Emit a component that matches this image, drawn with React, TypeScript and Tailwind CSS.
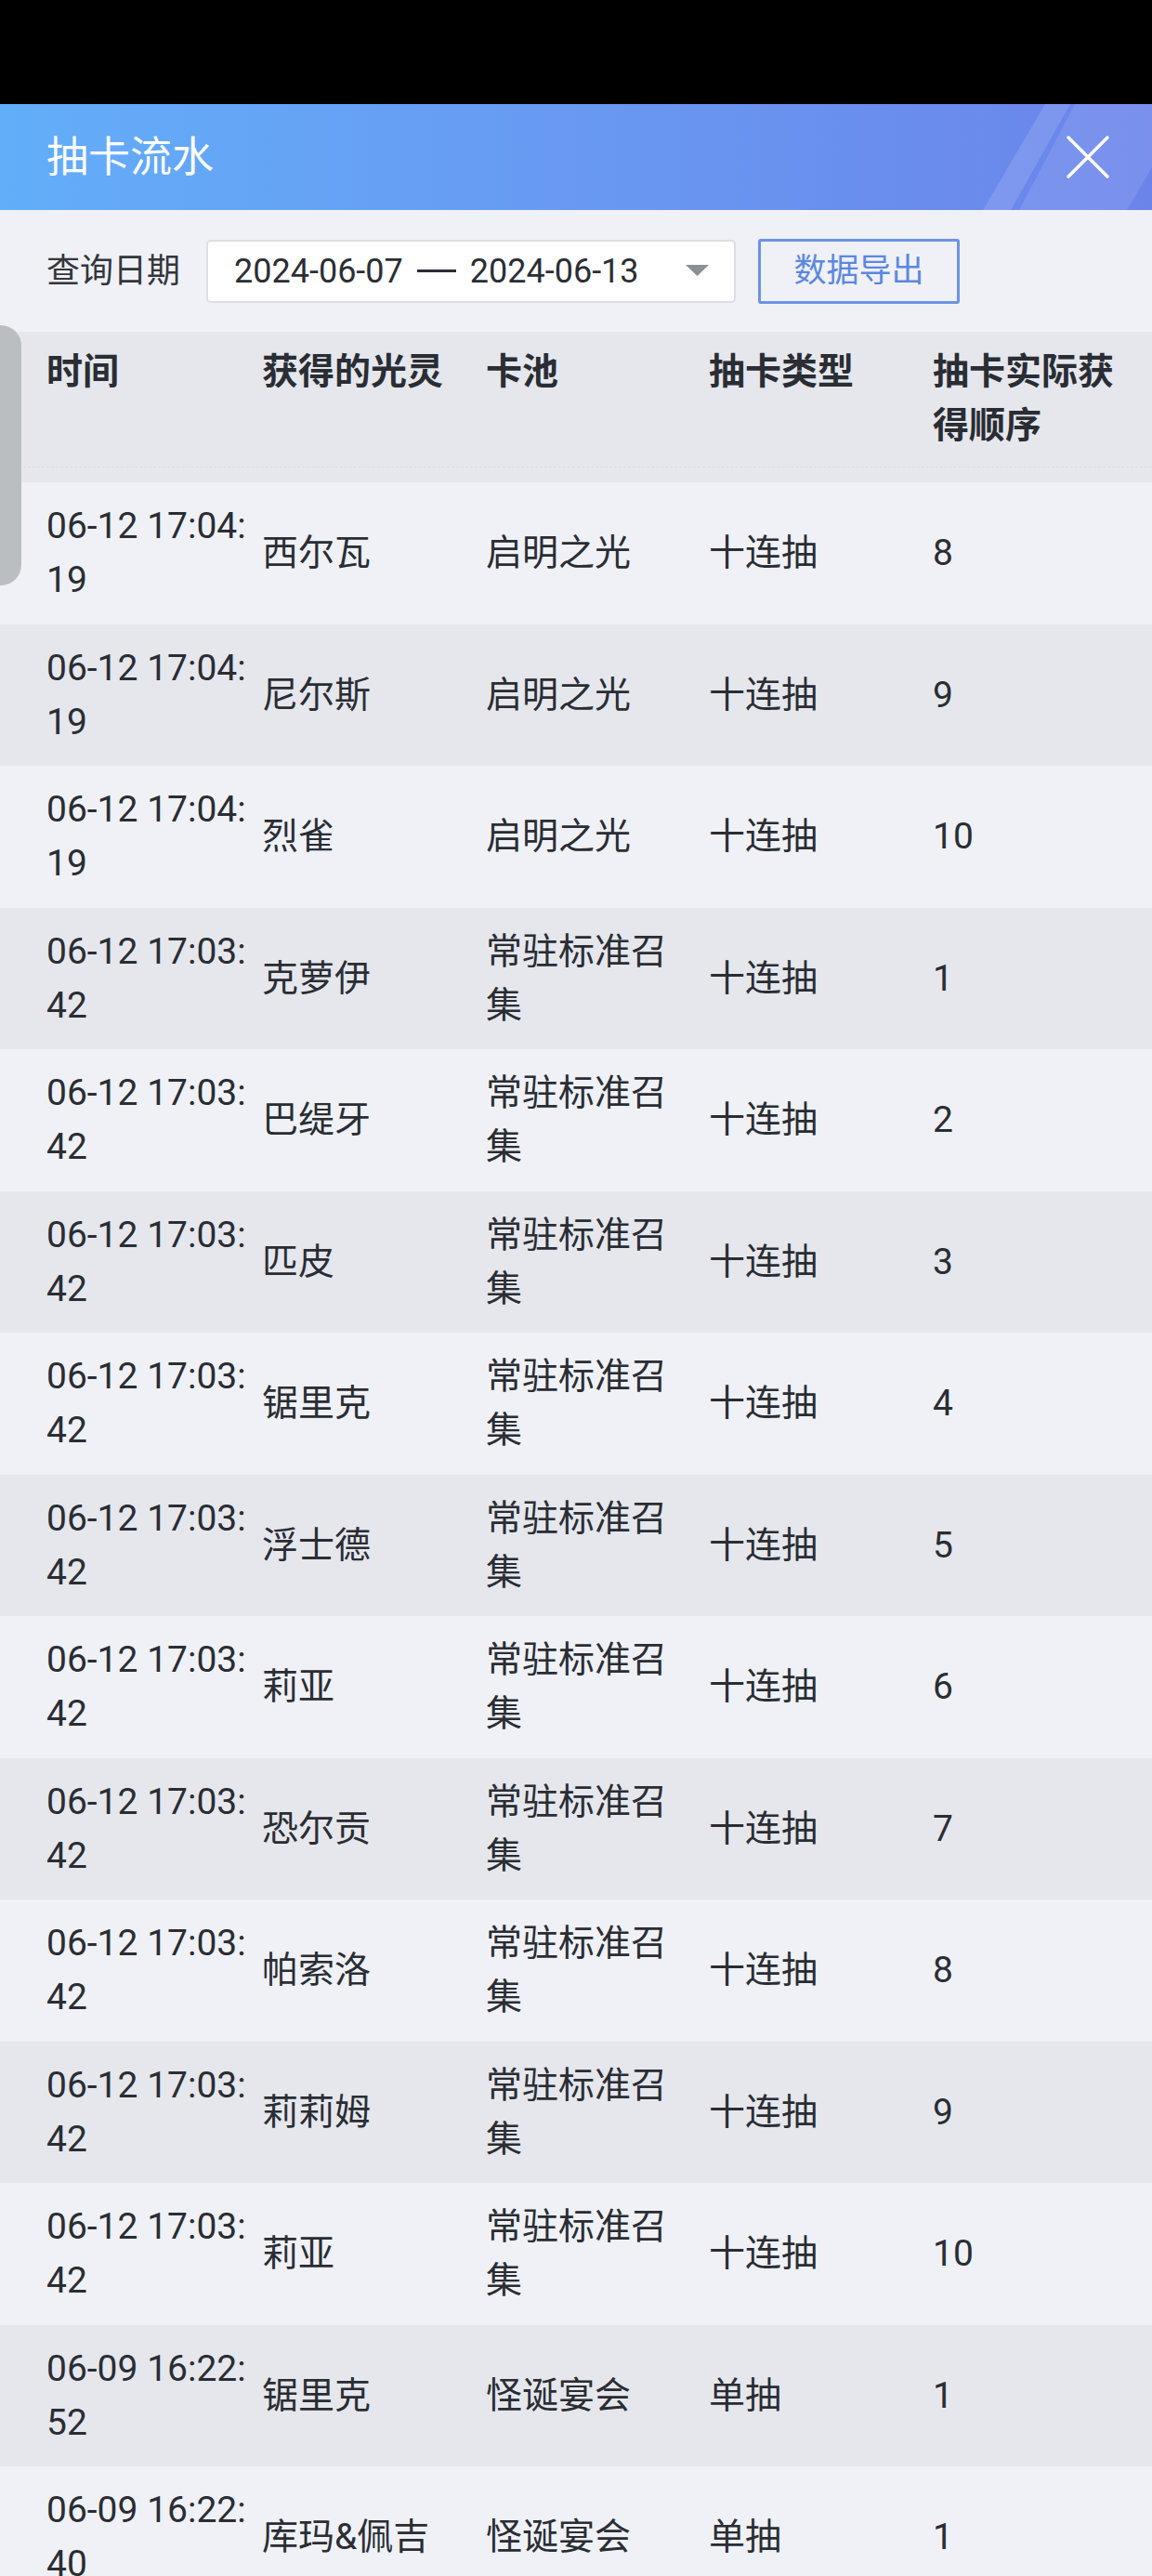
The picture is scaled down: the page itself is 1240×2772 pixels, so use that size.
const headers = ['时间', '获得的光灵', '卡池', '抽卡类型', '抽卡实际获得顺序'];

const rows = [
  ['06-12 17:04:19', '西尔瓦', '启明之光', '十连抽', '8'],
  ['06-12 17:04:19', '尼尔斯', '启明之光', '十连抽', '9'],
  ['06-12 17:04:19', '烈雀', '启明之光', '十连抽', '10'],
  ['06-12 17:03:42', '克萝伊', '常驻标准召集', '十连抽', '1'],
  ['06-12 17:03:42', '巴缇牙', '常驻标准召集', '十连抽', '2'],
  ['06-12 17:03:42', '匹皮', '常驻标准召集', '十连抽', '3'],
  ['06-12 17:03:42', '锯里克', '常驻标准召集', '十连抽', '4'],
  ['06-12 17:03:42', '浮士德', '常驻标准召集', '十连抽', '5'],
  ['06-12 17:03:42', '莉亚', '常驻标准召集', '十连抽', '6'],
  ['06-12 17:03:42', '恐尔贡', '常驻标准召集', '十连抽', '7'],
  ['06-12 17:03:42', '帕索洛', '常驻标准召集', '十连抽', '8'],
  ['06-12 17:03:42', '莉莉姆', '常驻标准召集', '十连抽', '9'],
  ['06-12 17:03:42', '莉亚', '常驻标准召集', '十连抽', '10'],
  ['06-09 16:22:52', '锯里克', '怪诞宴会', '单抽', '1'],
  ['06-09 16:22:40', '库玛&佩吉', '怪诞宴会', '单抽', '1'],
];

export default function App() {
  return (
    <div className="relative h-[2772px] w-full overflow-hidden bg-[#eff1f6] font-[Roboto,'Noto_Sans_CJK_SC',sans-serif] text-[#2a2d34]">
      {/* status bar */}
      <div className="h-[112px] bg-black" />

      {/* title bar */}
      <header className="relative flex h-[114px] items-center justify-between overflow-hidden bg-linear-to-r from-[#62aef9] to-[#6b84ea] pl-[50px] pr-[45px]">
        <svg className="absolute inset-0 h-full w-full" viewBox="0 0 1240 114" preserveAspectRatio="none">
          <polygon points="1125,0 1152,0 1088,114 1058,114" fill="#ffffff" fillOpacity="0.13" />
          <polygon points="1157,0 1280,0 1213,114 1097,114" fill="#ffffff" fillOpacity="0.1" />
        </svg>
        <h1 className="relative text-[45px] leading-none text-white">抽卡流水</h1>
        <button className="relative flex h-[48px] w-[48px] items-center justify-center">
          <svg width="48" height="48" viewBox="0 0 48 48" fill="none" stroke="#ffffff" strokeWidth="3.5" strokeLinecap="round">
            <path d="M3 3L45 45M45 3L3 45" />
          </svg>
        </button>
      </header>

      {/* filter row */}
      <div className="flex h-[131px] items-center pl-[50px]">
        <span className="text-[36px] leading-none text-[#33363c]">查询日期</span>
        <div className="ml-[28px] flex h-[68px] w-[570px] items-center rounded-[5px] border-2 border-[#dcdee3] bg-white pl-[28px] pr-[27px] text-[36px] leading-none text-[#2b2e35]">
          <span>2024-06-07</span>
          <span className="mx-[15px] h-[3px] w-[42px] bg-[#2b2e35]" />
          <span>2024-06-13</span>
          <svg className="ml-auto" width="25" height="13" viewBox="0 0 25 13">
            <path d="M0 0h25L12.5 12z" fill="#8c8f95" />
          </svg>
        </div>
        <button className="ml-[24px] h-[70px] w-[217px] rounded-[3px] border-[3px] border-[#6a93e6] text-[35px] leading-none text-[#5b87e0]">
          数据导出
        </button>
      </div>

      {/* table header */}
      <div className="bg-[#e5e7ec] pb-[16px]">
        <div className="grid grid-cols-[232px_241px_240px_241px_1fr] border-b border-dashed border-[#d2dcee] pb-[15px] pl-[50px] pt-[14px] text-[39px] font-bold leading-[58px]">
          {headers.map((h) => (
            <div key={h} className="pr-[10px]">
              {h}
            </div>
          ))}
        </div>
      </div>

      {/* table body */}
      {rows.map((r, i) => (
        <div
          key={i}
          className={`grid h-[152.5px] grid-cols-[232px_241px_240px_241px_1fr] items-center pl-[50px] text-[39px] leading-[58px] ${
            i % 2 === 1 ? 'bg-[#e5e7ec]' : 'bg-[#eff1f6]'
          }`}
        >
          <div className="break-all pr-[6px]">{r[0]}</div>
          <div className="pr-[10px]">{r[1]}</div>
          <div className="pr-[10px]">{r[2]}</div>
          <div className="pr-[10px]">{r[3]}</div>
          <div className="pr-[10px]">{r[4]}</div>
        </div>
      ))}

      {/* scroll thumb */}
      <div className="absolute left-0 top-[350px] h-[280px] w-[23px] rounded-r-[22px] bg-[#babec1]" />
    </div>
  );
}
